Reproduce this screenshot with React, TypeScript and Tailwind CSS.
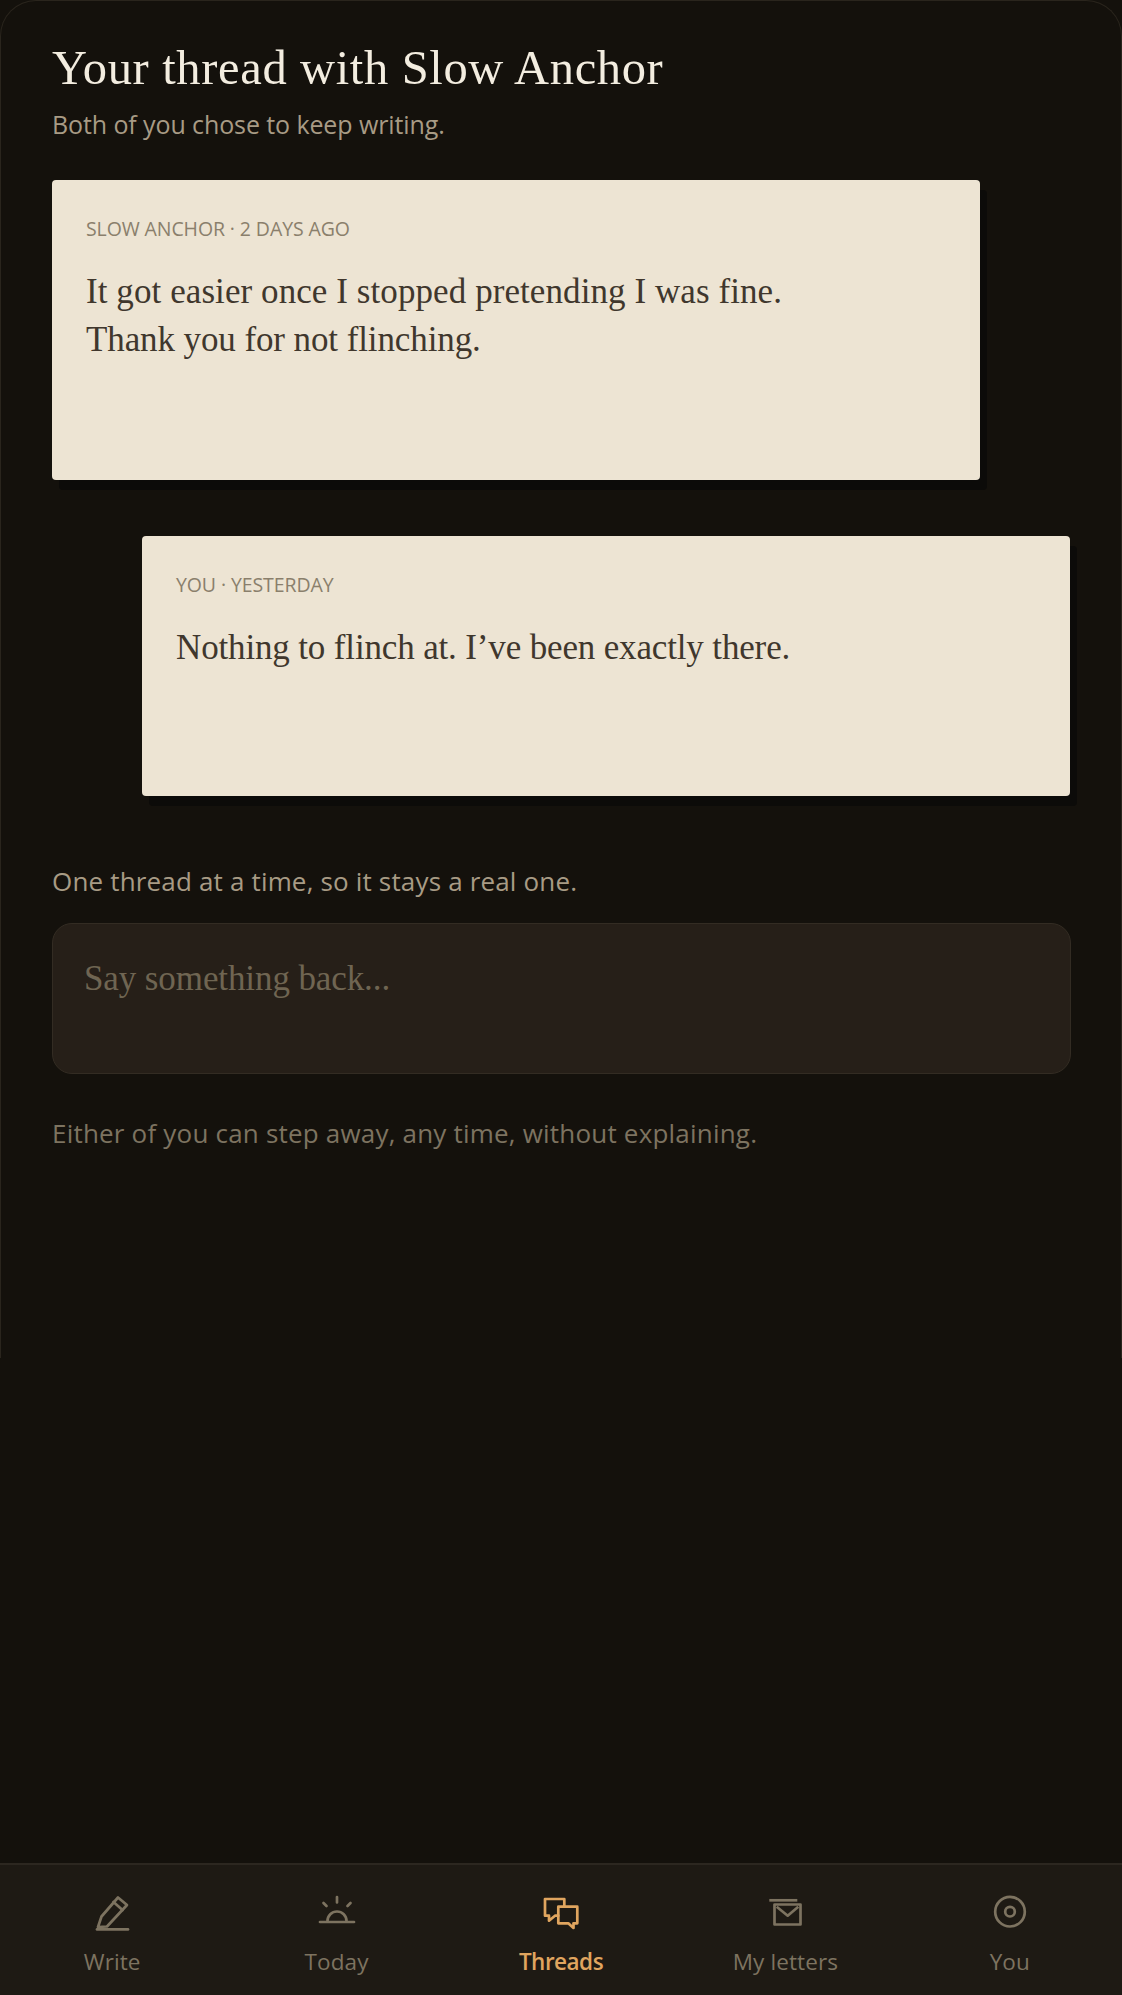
import React from 'react';

const serif = "font-['Liberation_Serif',serif]";
const sans = "font-['Open_Sans',sans-serif]";

const WriteIcon = () => (
    <svg width="40" height="40" viewBox="0 0 40 40" fill="none" stroke="currentColor" strokeWidth="2.7" strokeLinejoin="round" strokeLinecap="round">
        <path d="M6 34 L9.5 23.5 L26 4.5 L35 12 L15 33.5 Z" />
        <path d="M21.5 9 L30.5 17" />
        <path d="M5 36.4 H36" />
    </svg>
);

const TodayIcon = () => (
    <svg width="40" height="40" viewBox="0 0 40 40" fill="none" stroke="currentColor" strokeWidth="2.7" strokeLinecap="round">
        <path d="M3 29 H37" />
        <path d="M10.5 28 A9.5 9.5 0 0 1 29.5 28" />
        <path d="M20 4 V9.5 M6.5 10 L9.5 13 M33.5 10 L30.5 13" />
    </svg>
);

const ThreadsIcon = () => (
    <svg width="40" height="40" viewBox="0 0 40 40" fill="none" stroke="currentColor" strokeWidth="2.7" strokeLinejoin="round" strokeLinecap="round">
        <path d="M23.3 13.7 V6 H4 V22.7 H8 V27.7 L14 22.7 H17.3" />
        <path d="M17.3 13.7 H36.3 V30.3 H32.5 V35 L27.3 30.3 H17.3 Z" />
    </svg>
);

const LettersIcon = () => (
    <svg width="40" height="40" viewBox="0 0 40 40" fill="none" stroke="currentColor" strokeWidth="2.7" strokeLinejoin="round">
        <path d="M4.3 7.3 H32.3" />
        <rect x="9.5" y="11.5" width="26" height="20" />
        <path d="M11.7 13.7 L22.7 22.7 L33.3 13.7" />
    </svg>
);

const YouIcon = () => (
    <svg width="40" height="40" viewBox="0 0 40 40" fill="none" stroke="currentColor" strokeWidth="2.7">
        <circle cx="20" cy="18.7" r="14.8" />
        <circle cx="20" cy="18.7" r="4.8" />
    </svg>
);

const tabs = [
    { label: 'Write', icon: <WriteIcon /> },
    { label: 'Today', icon: <TodayIcon /> },
    { label: 'Threads', icon: <ThreadsIcon />, active: true },
    { label: 'My letters', icon: <LettersIcon /> },
    { label: 'You', icon: <YouIcon /> },
];

const Letter: React.FC<{ meta: string; lines: { text: string; tracking: string }[]; className: string }> = ({ meta, lines, className }) => (
    <div className={`w-[928px] rounded-[4px] bg-[#ede4d3] px-[34px] pt-[35px] shadow-[7px_10px_0_#0c0b09] ${className}`}>
        <div className={`${sans} text-[19.5px] leading-[27px] tracking-[-0.1px] text-[#8a7f6c]`}>{meta}</div>
        <div className={`${serif} mt-[26px] text-[35px] leading-[48px] text-[#40372d]`}>
            {lines.map((line) => (
                <div key={line.text} className={line.tracking}>{line.text}</div>
            ))}
        </div>
    </div>
);

export default function App() {
    return (
        <div className="flex h-[1995px] w-[1122px] flex-col bg-[#14110c]">
            <div className="h-[1358px] rounded-t-[36px] border border-b-0 border-[#2a251d] px-[51px] pt-[36px]">
                <h1 className={`${serif} text-[48.5px] leading-[62px] tracking-[0.65px] text-[#f3ede0]`}>Your thread with Slow Anchor</h1>
                <p className={`${sans} mt-[9px] text-[25px] leading-[32px] tracking-[-0.1px] text-[#a89b85]`}>Both of you chose to keep writing.</p>

                <Letter
                    className="mt-[40px] h-[300px]"
                    meta="SLOW ANCHOR · 2 DAYS AGO"
                    lines={[
                        { text: 'It got easier once I stopped pretending I was fine.', tracking: 'tracking-[0.08px]' },
                        { text: 'Thank you for not flinching.', tracking: 'tracking-[-0.1px]' },
                    ]}
                />
                <Letter
                    className="mt-[56px] ml-[90px] h-[260px]"
                    meta="YOU · YESTERDAY"
                    lines={[{ text: 'Nothing to flinch at. I’ve been exactly there.', tracking: 'tracking-[-0.15px]' }]}
                />

                <p className={`${sans} mt-[68px] text-[26px] leading-[34px] tracking-[0.17px] text-[#a89b85]`}>One thread at a time, so it stays a real one.</p>
                <textarea
                    readOnly
                    placeholder="Say something back..."
                    className={`${serif} mt-[25px] block h-[151px] w-[1019px] resize-none rounded-[20px] border border-[#332c23] bg-[#261f18] px-[31px] py-[33px] text-[35px] leading-[44px] tracking-[-0.1px] outline-none placeholder:text-[#6f6552]`}
                />
                <p className={`${sans} mt-[42px] text-[26px] leading-[34px] tracking-[0.2px] text-[#7d7360]`}>Either of you can step away, any time, without explaining.</p>
            </div>

            <nav className="mt-auto grid h-[132px] grid-cols-5 border-t-2 border-[#2c2720] bg-[#1e1a14] pt-[28px]">
                {tabs.map((tab) => (
                    <div key={tab.label} className={`flex flex-col items-center ${tab.active ? 'text-[#e0a55f]' : 'text-[#7d7360]'}`}>
                        {tab.icon}
                        <span className={`${sans} mt-[13px] text-[22.5px] leading-[32px] ${tab.active ? 'font-semibold tracking-[-0.5px]' : 'tracking-[0.1px]'}`}>{tab.label}</span>
                    </div>
                ))}
            </nav>
        </div>
    );
}
